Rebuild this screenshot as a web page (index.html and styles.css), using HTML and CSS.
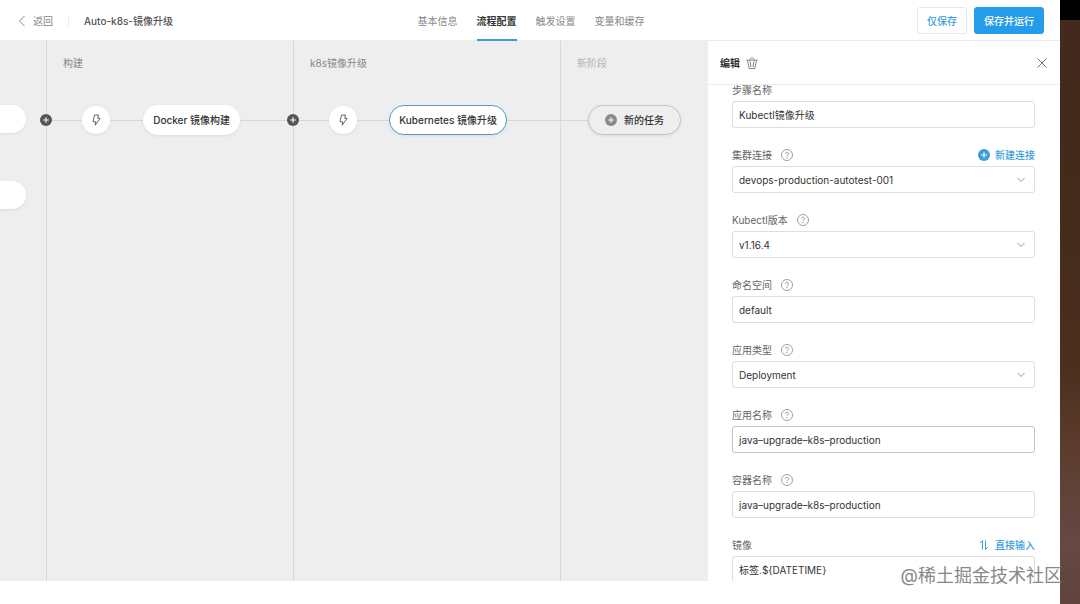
FILE: index.html
```html
<!DOCTYPE html>
<html lang="zh-CN">
<head>
    <meta charset="UTF-8">
    <meta name="viewport" content="width=device-width, initial-scale=1">
    <title>Auto-k8s-镜像升级</title>
    <link rel="stylesheet" href="styles.css">
</head>
<body>
    <!-- Shared icons -->
    <svg class="sprite" aria-hidden="true">
        <symbol id="icon-bolt" viewBox="0 0 12 12">
            <path d="M4.500 1h4L7.700 4.300h2.500L5.200 11.200l.6-3.400H3z" fill="none" stroke="currentColor" stroke-width=".9" stroke-linejoin="round"/>
        </symbol>
        <symbol id="icon-plus" viewBox="0 0 12 12">
            <circle cx="6" cy="6" r="6" fill="currentColor"/>
            <path d="M6 3.200v5.600M3.200 6h5.600" stroke="#fff" stroke-width="1.1"/>
        </symbol>
        <symbol id="icon-help" viewBox="0 0 12 12">
            <circle cx="6" cy="6" r="5.500" fill="none" stroke="currentColor" stroke-width=".8"/>
            <path d="M4.500 4.800c0-2.100 3-2 3 0C7.500 5.900 6 5.900 6 7.200" fill="none" stroke="currentColor" stroke-width=".9"/>
            <circle cx="6" cy="8.700" r=".6" fill="currentColor"/>
        </symbol>
    </svg>

    <div class="page">
        <div class="app">
            <header class="topbar">
                <div class="crumbs">
                    <a class="back" href="#">
                        <svg class="back-icon" viewBox="0 0 8 12"><path d="M6.500 1L1.500 6l5 5" fill="none" stroke="currentColor"/></svg>
                        返回
                    </a>
                    <span class="divider"></span>
                    <span class="title">Auto-k8s-镜像升级</span>
                </div>
                <nav class="tabs">
                    <a class="tab" href="#">基本信息</a>
                    <a class="tab active" href="#">流程配置</a>
                    <a class="tab" href="#">触发设置</a>
                    <a class="tab" href="#">变量和缓存</a>
                </nav>
                <div class="actions">
                    <button type="button" class="btn">仅保存</button>
                    <button type="button" class="btn btn-primary">保存并运行</button>
                </div>
            </header>

            <main class="workspace">
                <section class="canvas">
                    <div class="stage stage-source">
                        <div class="node"></div>
                        <div class="node"></div>
                    </div>
                    <div class="stage stage-build">
                        <h3 class="stage-name">构建</h3>
                        <button type="button" class="insert" aria-label="添加阶段"><svg class="icon"><use href="#icon-plus"/></svg></button>
                        <div class="flow">
                            <span class="line line-start"></span>
                            <button type="button" class="trigger" aria-label="触发"><svg class="icon"><use href="#icon-bolt"/></svg></button>
                            <span class="line"></span>
                            <button type="button" class="task">Docker 镜像构建</button>
                            <span class="line line-end"></span>
                        </div>
                    </div>
                    <div class="stage stage-upgrade">
                        <h3 class="stage-name">k8s镜像升级</h3>
                        <button type="button" class="insert" aria-label="添加阶段"><svg class="icon"><use href="#icon-plus"/></svg></button>
                        <div class="flow">
                            <span class="line line-start"></span>
                            <button type="button" class="trigger" aria-label="触发"><svg class="icon"><use href="#icon-bolt"/></svg></button>
                            <span class="line"></span>
                            <button type="button" class="task selected">Kubernetes 镜像升级</button>
                            <span class="line line-end"></span>
                        </div>
                    </div>
                    <div class="stage stage-new">
                        <h3 class="stage-name">新阶段</h3>
                        <div class="flow">
                            <span class="line line-new"></span>
                            <button type="button" class="task task-new"><svg class="icon"><use href="#icon-plus"/></svg>新的任务</button>
                        </div>
                    </div>
                </section>

                <aside class="drawer">
                    <div class="drawer-head">
                        <h2 class="drawer-title">编辑</h2>
                        <button type="button" class="icon-btn" aria-label="删除">
                            <svg class="icon" viewBox="0 0 12 12"><path d="M.5 3.200h11M3.800 3.200C3.800.2 8.200.2 8.200 3.200M1.500 3.200l1.700 8.300h5.600l1.700-8.300M4.200 4.500l.7 5.500M7.800 4.500L7.100 10" fill="none" stroke="currentColor" stroke-width=".9"/></svg>
                        </button>
                        <button type="button" class="icon-btn close" aria-label="关闭">
                            <svg class="icon" viewBox="0 0 12 12"><path d="M1.500 1.500l9 9M10.500 1.500l-9 9" stroke="currentColor"/></svg>
                        </button>
                    </div>
                    <div class="drawer-body">
                        <form class="form">
                            <div class="field">
                                <div class="field-head"><label for="stepName">步骤名称</label></div>
                                <input class="control" type="text" id="stepName" value="Kubectl镜像升级">
                            </div>
                            <div class="field">
                                <div class="field-head">
                                    <label for="cluster">集群连接</label>
                                    <svg class="icon help"><use href="#icon-help"/></svg>
                                    <a class="field-link" href="#"><svg class="icon"><use href="#icon-plus"/></svg>新建连接</a>
                                </div>
                                <div class="select">
                                    <select class="control" id="cluster"><option>devops-production-autotest-001</option></select>
                                    <svg class="arrow" viewBox="0 0 8 6"><path d="M.5 1L4 4.500 7.500 1" fill="none" stroke="currentColor"/></svg>
                                </div>
                            </div>
                            <div class="field">
                                <div class="field-head">
                                    <label for="version">Kubectl版本</label>
                                    <svg class="icon help"><use href="#icon-help"/></svg>
                                </div>
                                <div class="select">
                                    <select class="control" id="version"><option>v1.16.4</option></select>
                                    <svg class="arrow" viewBox="0 0 8 6"><path d="M.5 1L4 4.500 7.500 1" fill="none" stroke="currentColor"/></svg>
                                </div>
                            </div>
                            <div class="field">
                                <div class="field-head">
                                    <label for="namespace">命名空间</label>
                                    <svg class="icon help"><use href="#icon-help"/></svg>
                                </div>
                                <input class="control" type="text" id="namespace" value="default">
                            </div>
                            <div class="field">
                                <div class="field-head">
                                    <label for="appType">应用类型</label>
                                    <svg class="icon help"><use href="#icon-help"/></svg>
                                </div>
                                <div class="select">
                                    <select class="control" id="appType"><option>Deployment</option></select>
                                    <svg class="arrow" viewBox="0 0 8 6"><path d="M.5 1L4 4.500 7.500 1" fill="none" stroke="currentColor"/></svg>
                                </div>
                            </div>
                            <div class="field">
                                <div class="field-head">
                                    <label for="appName">应用名称</label>
                                    <svg class="icon help"><use href="#icon-help"/></svg>
                                </div>
                                <input class="control hovered" type="text" id="appName" value="java–upgrade–k8s–production">
                            </div>
                            <div class="field">
                                <div class="field-head">
                                    <label for="containerName">容器名称</label>
                                    <svg class="icon help"><use href="#icon-help"/></svg>
                                </div>
                                <input class="control" type="text" id="containerName" value="java–upgrade–k8s–production">
                            </div>
                            <div class="field">
                                <div class="field-head">
                                    <label for="image">镜像</label>
                                    <a class="field-link" href="#"><svg class="icon" viewBox="0 0 12 12"><path d="M2 4l2.500-2.500V10.500M7.500 1.500v9L10 8" fill="none" stroke="currentColor"/></svg>直接输入</a>
                                </div>
                                <input class="control" type="text" id="image" value="标签.${DATETIME}">
                            </div>
                        </form>
                    </div>
                </aside>
            </main>
        </div>
        <div class="desktop"></div>
    </div>
    <div class="watermark">@稀土掘金技术社区</div>
</body>
</html>
```
FILE: styles.css
```css
* {
    box-sizing: border-box;
}

body {
    margin: 0;
    font-family: Inter, "Noto Sans CJK SC", sans-serif;
    font-size: 10px;
    line-height: 16px;
    color: #333;
    background-color: #fff;
}

a {
    color: inherit;
    text-decoration: none;
}

button,
input,
select {
    font: inherit;
    color: inherit;
}

button {
    padding: 0;
    border: none;
    background: none;
    cursor: pointer;
}

h2,
h3 {
    margin: 0;
    font-size: 10px;
}

.sprite {
    position: absolute;
    width: 0;
    height: 0;
}

.icon {
    display: block;
    flex: none;
    width: 12px;
    height: 12px;
}

.page {
    display: flex;
    height: 100vh;
    overflow: hidden;
}

.app {
    display: flex;
    flex-direction: column;
    flex: 1;
    min-width: 0;
    padding-bottom: 23px;
}

.desktop {
    width: 20px;
    border-top: 20px solid #000;
    background: linear-gradient(#44291e, #432a1b 25%, #4b2f1f 60%, #5b3b2c 72%, #664944 90%, #60433c);
}

/* Top bar */
.topbar {
    display: grid;
    grid-template-columns: 1fr auto 1fr;
    align-items: center;
    height: 41px;
    padding: 0 16px 0 18px;
    border-bottom: 1px solid #ececec;
}

.crumbs {
    display: flex;
    align-items: center;
}

.back {
    display: flex;
    align-items: center;
    gap: 7px;
    color: #888;
}

.back-icon {
    width: 8px;
    height: 12px;
}

.divider {
    width: 1px;
    height: 12px;
    margin: 0 15px;
    background-color: #ececec;
}

.title {
    font-weight: 500;
    color: #555;
}

.tabs {
    display: flex;
    gap: 19px;
    height: 41px;
}

.tab {
    border-bottom: 2px solid transparent;
    line-height: 42px;
    color: #888;
}

.tab.active {
    border-color: #3a9fd0;
    font-weight: bold;
    color: #333;
}

.actions {
    display: flex;
    justify-content: flex-end;
    gap: 7px;
}

.btn {
    height: 27px;
    padding: 0 9px;
    border: 1px solid #dcebf5;
    border-radius: 3px;
    font-weight: 500;
    color: #3a9fdc;
}

.btn-primary {
    border-color: #259cea;
    background-color: #259cea;
    color: #fff;
}

/* Pipeline canvas */
.workspace {
    display: flex;
    flex: 1;
    min-height: 0;
}

.canvas {
    display: flex;
    flex: 1;
    min-width: 0;
    overflow: hidden;
    background-color: #eee;
}

.stage {
    position: relative;
    flex: none;
    padding-top: 14px;
    border-left: 1px solid #d8d8d8;
}

.stage-source {
    width: 46px;
    padding-top: 64px;
    border-left: none;
}

.stage-build {
    width: 247px;
}

.stage-upgrade {
    width: 267px;
}

.stage-new {
    flex: 1;
}

.stage-name {
    margin-bottom: 34px;
    padding-left: 16px;
    font-weight: normal;
    color: #888;
}

.stage-new .stage-name {
    color: #b5b5b5;
}

.node {
    width: 26px;
    height: 28px;
    margin-bottom: 48px;
    border-radius: 0 14px 14px 0;
    background-color: #fff;
    box-shadow: 0 1px 3px rgba(0, 0, 0, 0.08);
}

.flow {
    display: flex;
    align-items: center;
    height: 30px;
}

.line {
    flex: 1;
    height: 1px;
    background-color: #d6d6d6;
}

.line-start {
    flex: none;
    width: 35px;
}

.line-end {
    flex: none;
    width: 53px;
}

.line-new {
    flex: none;
    width: 27px;
}

/* sits on the border between two stages */
.insert {
    position: absolute;
    top: 73px;
    left: -7px;
    color: #555;
}

.trigger {
    display: flex;
    align-items: center;
    justify-content: center;
    width: 28px;
    height: 28px;
    border-radius: 50%;
    background-color: #fff;
    box-shadow: 0 1px 3px rgba(0, 0, 0, 0.08);
    color: #555;
}

.task {
    height: 30px;
    padding: 0 10px;
    border-radius: 15px;
    background-color: #fff;
    box-shadow: 0 1px 3px rgba(0, 0, 0, 0.08);
    font-weight: 500;
}

.task.selected {
    padding: 0 9px;
    border: 1px solid #4f9fd0;
}

.task-new {
    display: flex;
    align-items: center;
    gap: 7px;
    padding: 0 16px;
    border: 1px solid #c4c4c4;
    background-color: #eee;
}

.task-new .icon {
    color: #8a8a8a;
}

/* Edit drawer */
.drawer {
    display: flex;
    flex-direction: column;
    flex: none;
    width: 352px;
    background-color: #fff;
}

.drawer-head {
    display: flex;
    align-items: center;
    gap: 6px;
    height: 44px;
    padding: 0 12px;
    border-bottom: 1px solid #ececec;
}

.icon-btn {
    color: #777;
}

.close {
    margin-left: auto;
}

.drawer-body {
    flex: 1;
    min-height: 0;
    overflow: hidden;
}

.form {
    padding: 0 25px 0 24px;
}

.field {
    margin-bottom: 22px;
}

.field-head {
    display: flex;
    align-items: center;
    height: 10px;
    margin-bottom: 6px;
    line-height: 10px;
    color: #666;
}

.help {
    margin-left: 9px;
    color: #888;
}

.field-link {
    display: flex;
    align-items: center;
    gap: 5px;
    margin-left: auto;
    font-weight: 500;
    color: #3a9fdc;
}

.control {
    display: block;
    width: 100%;
    height: 27px;
    padding: 0 6px;
    border: 1px solid #dedede;
    border-radius: 3px;
    background-color: #fff;
    appearance: none;
}

.control.hovered {
    border-color: #c4c4c4;
}

.select {
    position: relative;
}

.arrow {
    position: absolute;
    top: 11px;
    right: 10px;
    width: 8px;
    height: 6px;
    color: #999;
    pointer-events: none;
}

.watermark {
    position: absolute;
    right: 18px;
    bottom: 16px;
    font-size: 18px;
    line-height: 24px;
    color: #888;
}
```
